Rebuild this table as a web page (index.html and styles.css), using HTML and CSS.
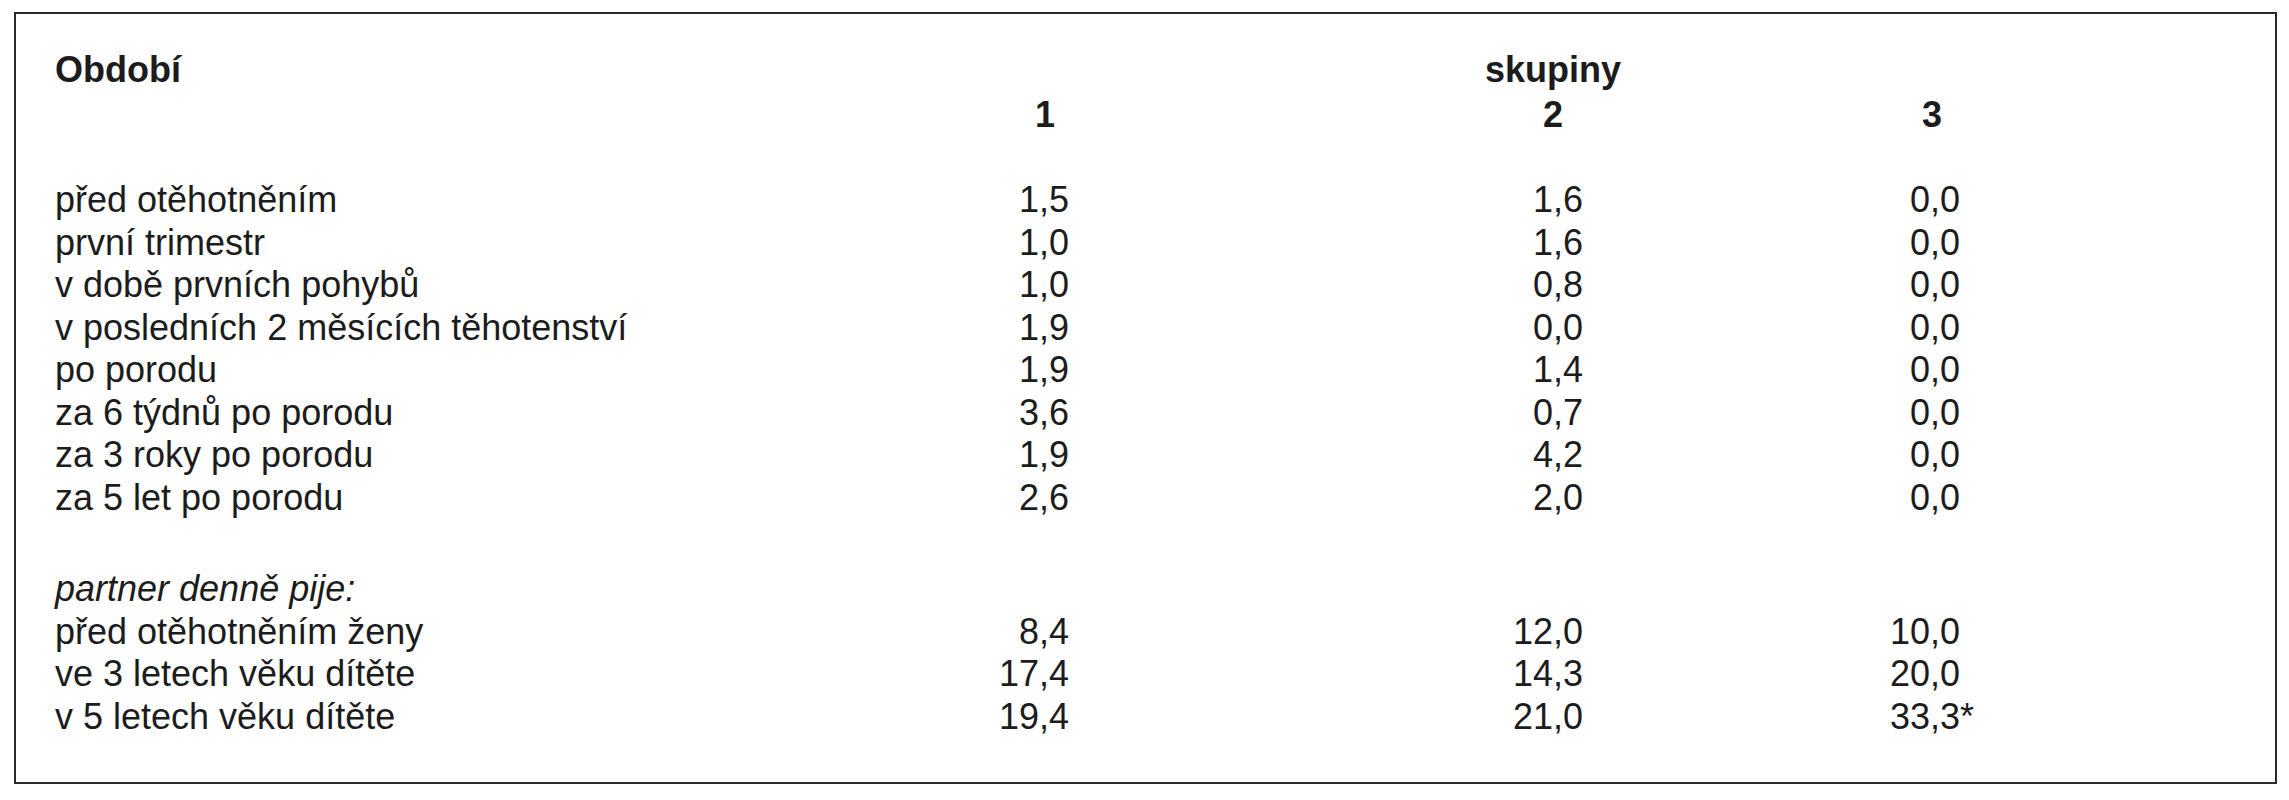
FILE: index.html
```html
<!DOCTYPE html>
<html lang="cs">
<head>
<meta charset="utf-8">
<title>Období – skupiny</title>
<link rel="stylesheet" href="styles.css">
</head>
<body>
<div class="box">
  <div class="row head1">
    <div class="c0 b">Období</div>
    <div class="c2 b ctr">skupiny</div>
  </div>
  <div class="row head2">
    <div class="c1 b ctr">1</div>
    <div class="c2 b ctr">2</div>
    <div class="c3 b ctr">3</div>
  </div>

  <div class="group first">
    <div class="row"><div class="c0">před otěhotněním</div><div class="c1 num">1,5</div><div class="c2 num">1,6</div><div class="c3 num">0,0</div></div>
    <div class="row"><div class="c0">první trimestr</div><div class="c1 num">1,0</div><div class="c2 num">1,6</div><div class="c3 num">0,0</div></div>
    <div class="row"><div class="c0">v době prvních pohybů</div><div class="c1 num">1,0</div><div class="c2 num">0,8</div><div class="c3 num">0,0</div></div>
    <div class="row"><div class="c0">v posledních 2 měsících těhotenství</div><div class="c1 num">1,9</div><div class="c2 num">0,0</div><div class="c3 num">0,0</div></div>
    <div class="row"><div class="c0">po porodu</div><div class="c1 num">1,9</div><div class="c2 num">1,4</div><div class="c3 num">0,0</div></div>
    <div class="row"><div class="c0">za 6 týdnů po porodu</div><div class="c1 num">3,6</div><div class="c2 num">0,7</div><div class="c3 num">0,0</div></div>
    <div class="row"><div class="c0">za 3 roky po porodu</div><div class="c1 num">1,9</div><div class="c2 num">4,2</div><div class="c3 num">0,0</div></div>
    <div class="row"><div class="c0">za 5 let po porodu</div><div class="c1 num">2,6</div><div class="c2 num">2,0</div><div class="c3 num">0,0</div></div>
  </div>

  <div class="group second">
    <div class="row"><div class="c0 it">partner denně pije:</div></div>
    <div class="row"><div class="c0">před otěhotněním ženy</div><div class="c1 num">8,4</div><div class="c2 num">12,0</div><div class="c3 num">10,0</div></div>
    <div class="row"><div class="c0">ve 3 letech věku dítěte</div><div class="c1 num">17,4</div><div class="c2 num">14,3</div><div class="c3 num">20,0</div></div>
    <div class="row"><div class="c0">v 5 letech věku dítěte</div><div class="c1 num">19,4</div><div class="c2 num">21,0</div><div class="c3 num">33,3<span class="mark">*</span></div></div>
  </div>
</div>
</body>
</html>
```
FILE: styles.css
```css
html, body {
  margin: 0;
  padding: 0;
  background: #ffffff;
}

body {
  font-family: "Liberation Sans", Arial, Helvetica, sans-serif;
  font-size: 36px;
  line-height: 42.5px;
  color: #1c1c1c;
}

.box {
  box-sizing: border-box;
  margin: 12px 0 0 14px;
  width: 2263px;
  height: 772px;
  border: 2px solid #2a2a2a;
  padding: 35px 0 0 39px;
}

.row {
  display: grid;
  grid-template-columns: 930px 120px 378px 140px 249px 120px;
  height: 42.5px;
  white-space: nowrap;
}

.c0 { grid-column: 1; }
.c1 { grid-column: 2; }
.c2 { grid-column: 4; }
.c3 { grid-column: 6; }

.b { font-weight: bold; }
.it { font-style: italic; }

.ctr { text-align: center; }

.head1 .c2 { overflow: visible; }

.head2 { margin-top: 2px; }

.num { text-align: right; }
.c1.num { padding-right: 36px; }
.c2.num { padding-right: 40px; }
.c3.num { padding-right: 32px; }

.mark { margin-right: -14px; }

.group.first { margin-top: 43px; }
.group.second { margin-top: 49px; }
```
